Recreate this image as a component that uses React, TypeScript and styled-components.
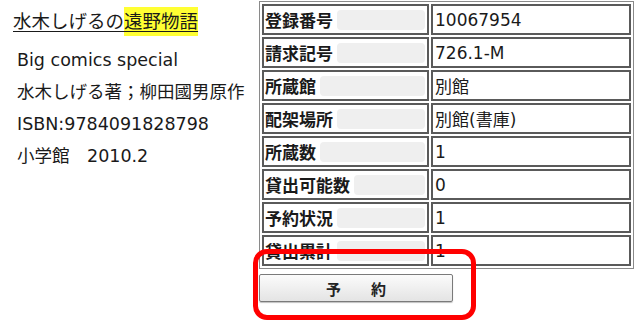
import React from 'react';
import styled, {createGlobalStyle} from "styled-components";

const GlobalStyle = createGlobalStyle`
  body {
    margin: 0;
    background: #FFFFFF;
    font-family: 'DejaVu Sans', 'Noto Sans CJK JP', sans-serif;
    color: #1a1a1a;
  }
`

const rows = [
    {label: '登録番号', value: '10067954'},
    {label: '請求記号', value: '726.1-M'},
    {label: '所蔵館', value: '別館'},
    {label: '配架場所', value: '別館(書庫)'},
    {label: '所蔵数', value: '1'},
    {label: '貸出可能数', value: '0'},
    {label: '予約状況', value: '1'},
    {label: '貸出累計', value: '1'},
]

const info = [
    'Big comics special',
    '水木しげる著；柳田國男原作',
    'ISBN:9784091828798',
    '小学館　2010.2',
]

export default function App() {
    return (
        <>
            <GlobalStyle/>
            <StyledPage>
                <BookInfo>
                    <Title>
                        水木しげるの<Highlight>遠野物語</Highlight>
                    </Title>
                    <InfoList>
                        {info.map((line) => (
                            <InfoLine key={line}>{line}</InfoLine>
                        ))}
                    </InfoList>
                </BookInfo>

                <HoldingWrapper>
                    <HoldingTable>
                        <tbody>
                        {rows.map((row) => (
                            <tr key={row.label}>
                                <LabelCell>
                                    <LabelInner>
                                        {row.label}
                                        <LabelShade/>
                                    </LabelInner>
                                </LabelCell>
                                <ValueCell>{row.value}</ValueCell>
                            </tr>
                        ))}
                        </tbody>
                    </HoldingTable>
                    <ReserveButton>予　　約</ReserveButton>
                    <Marker/>
                </HoldingWrapper>
            </StyledPage>
        </>
    );
}

const StyledPage = styled.div`
  display: flex;
  width: 640px;
  height: 325px;
  overflow: hidden;
`

const BookInfo = styled.div`
  width: 259px;
  flex-shrink: 0;
  padding-left: 13px;
  box-sizing: border-box;
  overflow: hidden;
  white-space: nowrap;
`

const Title = styled.div`
  margin-top: 7px;
  font-size: 18.5px;
  line-height: 29px;
  text-decoration: underline;
  text-underline-offset: 3px;
`

const Highlight = styled.span`
  display: inline-block;
  background: #FFFF33;
  text-decoration: underline;
  text-underline-offset: 3px;
`

const InfoList = styled.div`
  margin-top: 8px;
  padding-left: 4px;
`

const InfoLine = styled.div`
  font-size: 17.5px;
  line-height: 32px;
`

const HoldingWrapper = styled.div`
  position: relative;
  padding-top: 1px;
`

const HoldingTable = styled.table`
  border-collapse: separate;
  border-spacing: 2px;
  border: 1px solid #8a8a8a;
  width: 375px;
  font-size: 17px;
`

const LabelCell = styled.td`
  box-sizing: border-box;
  width: 167px;
  height: 31px;
  padding: 0 2px 0 1px;
  border: 2px solid #5a5a5a;
  font-weight: 700;
  white-space: nowrap;
`

const LabelInner = styled.div`
  display: flex;
  align-items: center;
  height: 100%;
`

const LabelShade = styled.span`
  flex: 1;
  align-self: stretch;
  margin: 4px 0 3px 4px;
  border-radius: 4px;
  background: #efefef;
`

const ValueCell = styled.td`
  box-sizing: border-box;
  height: 31px;
  padding: 0 2px;
  border: 2px solid #5a5a5a;
  white-space: nowrap;
`

const ReserveButton = styled.button`
  display: block;
  width: 194px;
  height: 28px;
  margin-top: 5px;
  border: 1px solid #7a7a7a;
  border-radius: 2px;
  background: linear-gradient(#fbfbfb, #e4e4e4);
  font-family: 'Noto Sans CJK JP', sans-serif;
  font-size: 15px;
  font-weight: 700;
  color: #222;
  padding-right: 6px;
  box-shadow: 0 1px 1px rgba(0, 0, 0, 0.25);
`

const Marker = styled.div`
  position: absolute;
  left: -6px;
  top: 249px;
  width: 223px;
  height: 71px;
  box-sizing: border-box;
  border: 5px solid #FF0000;
  border-radius: 14px;
`
